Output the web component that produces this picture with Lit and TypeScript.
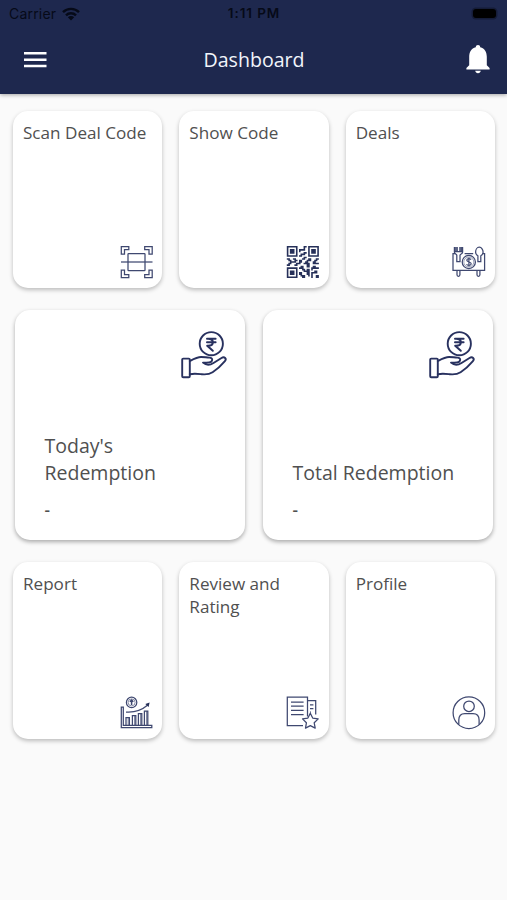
import { LitElement, html, css, svg } from "lit";
import { customElement, property } from "lit/decorators.js";

const scan = svg`<path d="M1.3 1.6h7.5v3h-4.3v4.600H1.300zM32.200 1.600h-7.500v3h4.300v4.600h3.200zM1.300 32.600h7.500v-3H4.500V25H1.300zM32.200 32.600h-7.500v-3h4.300V25h3.200z"/><rect x="8" y="8.600" width="17" height="17" rx=".6"/><path d="M1 17h31.500"/>`;

const modules = [
  "111111100001101111111",
  "100000100001001000001",
  "101110101111001011101",
  "101110101000001011101",
  "101110100001101011101",
  "100000100111001000001",
  "111111101100001111111",
  "000000000001100000000",
  "110011000011001100011",
  "011001101100011100110",
  "001111001100110001100",
  "011000111001111001111",
  "110001100000011000000",
  "000000000110011001100",
  "111111101110000011111",
  "100000100011011010000",
  "101110100001111000110",
  "101110101100011011110",
  "101110101100011010000",
  "100000100111001010011",
  "111111100011000010011",
];
const qrPath = modules
  .map((row, y) =>
    [...row].map((m, x) => (m === "1" ? `M${x} ${y}h1.05v1.05h-1.05z` : "")).join("")
  )
  .join("");
const qr = svg`<path class="fill" transform="translate(.8 1) scale(1.524)" d=${qrPath}></path>`;

const deals = svg`<path d="M3 8.700H1v16.600h31.600V8.700h-2M12.600 8.700h8.600"/><circle cx="16.800" cy="17" r="6.600"/><circle cx="16.800" cy="17" r="5" stroke-width=".5"/><path d="M19 14.700c-.6-1.600-4.200-1.500-4.200.5 0 2.200 4.400 1.300 4.400 3.600 0 2-4 2-4.600.3M16.900 12.600v9" stroke-width="1.200"/><path d="M2.400 2v5.200c0 1.700 2.200 1.700 2.400 3v6.500h3.200v-6.500c.2-1.300 2.600-1.300 2.600-3V2M5.200 2v5M7.900 2v5M3.800 2v5M9.300 2v5M2.400 6.600h8.200"/><path d="M27.300 2.200c-2.300 0-3.700 2.600-3.700 5 0 1.800.9 2.900 2.300 3.600v5.900h2.900v-5.900c1.400-.7 2.300-1.800 2.300-3.600 0-2.400-1.500-5-3.800-5z"/><path d="M5 25.300v4.500c0 2 2.900 2 2.900 0v-4.500M25 25.300v4.500c0 2 2.900 2 2.900 0v-4.500"/>`;

const report = svg`<circle cx="11.600" cy="6.400" r="5.200"/><circle cx="11.600" cy="6.400" r="3.500" stroke-width=".6"/><path d="M11.600 9V4.200M9.900 5.700l1.700-1.700 1.700 1.700" stroke-width="1.500"/><path d="M1.300 11h2v18.300h28.500v2.200H1.300zM6 29v-7.500h3.400V29M12.400 29v-9.500h3.400V29M18.400 29V17.500h3.400V29M24.400 29v-14h3.400v14"/><path d="M8.200 21.500V29M14.600 19.500V29M20.600 17.500V29M26.600 15V29" stroke-width=".7"/><path d="M6 16.100c8 .6 15-1.200 21.800-7"/><path class="fill" d="M25.300 7.900l4.300-1.300-1 4.300z"/>`;

const review = svg`<path d="M21.500 20.500V1.200H1.300v28.400H17M21.500 4.500h8.200v14M5 6.200h12.600M5 10.200h12.600M5 14.400h12.600M5 18.700h12.600M24 8.800h3.400M24 12.500h3.400M24 16h1"/><path stroke-linejoin="round" d="M24.300 17.200l2.400 4.900 5.500.8-4 3.900 1 5.300-4.900-2.500-4.800 2.500.9-5.300-3.900-3.900 5.400-.8z"/>`;

const profile = svg`<circle cx="16.900" cy="16.700" r="15.800"/><circle cx="17" cy="10.300" r="5.300"/><path d="M6.800 28.500V24c0-4 2.400-6.500 6-6.500h8.200c3.700 0 6.100 2.500 6.100 6.500v4.500"/>`;

const icons = { scan, qr, deals, report, review, profile };

const shared = css`
  svg { display: block; fill: none; stroke: #3f4870; stroke-width: 1.25; }
  .fill { fill: #263059; stroke: none; }
`;

@customElement("menu-tile")
class MenuTile extends LitElement {
  @property() label = "";
  @property() icon: keyof typeof icons = "scan";
  static styles = [
    shared,
    css`
      :host {
        display: flex; flex-direction: column; justify-content: space-between;
        box-sizing: border-box; height: 177px; padding: 10px 8.5px 9px 10px;
        background: #fff; border-radius: 15px;
        box-shadow: 0 2px 4px rgba(0, 0, 0, 0.25);
      }
      .label { font-size: 17.1px; line-height: 23px; }
      svg { align-self: flex-end; }
    `,
  ];
  render() {
    return html`<div class="label">${this.label}</div>
      <svg width="34" height="34" viewBox="0 0 34 34">${icons[this.icon]}</svg>`;
  }
}

@customElement("stat-card")
class StatCard extends LitElement {
  @property() label = "";
  @property() value = "-";
  static styles = [
    shared,
    css`
      :host {
        display: flex; flex-direction: column; box-sizing: border-box;
        height: 230px; padding: 20px 17.5px 16px 29.5px;
        background: #fff; border-radius: 15px;
        box-shadow: 0 2px 4px rgba(0, 0, 0, 0.32);
      }
      svg { align-self: flex-end; stroke: #28315f; stroke-width: 1.9; stroke-linejoin: round; stroke-linecap: round; }
      .label { margin-top: auto; font-size: 19.5px; line-height: 27px; max-width: 172px; }
      .value { margin-top: 10px; font-size: 17px; line-height: 28px; font-weight: 600; }
    `,
  ];
  render() {
    return html`<svg width="48" height="50" viewBox="0 0 48 50">
        <circle cx="31.3" cy="13.7" r="11.6" />
        <path d="M27 8.800h8.600M27 12.200h8.600M28 8.800c6.500 0 6.500 7 0 7h-.8l5.600 5" stroke-width="2" />
        <rect x="2.200" y="28.600" width="7.600" height="18.600" rx="1" />
        <path d="M9.800 31c5-2.600 7.600-4 11.200-4 3.500 0 5.500.6 8.500.6 4 0 3.300 4.600-.5 4.800-2.500.2-4 .2-6 .2 3 2.600 7 2.600 10.500.4l8-5c3-1.800 5.500.8 3.400 3.200-3.500 4.200-8 8.300-12.300 11.100-3.800 2.400-7 2.300-11 1.900-4.200-.4-7.600-.8-11.800 0" />
      </svg>
      <div class="label">${this.label}</div>
      <div class="value">${this.value}</div>`;
  }
}

@customElement("app-root")
class AppRoot extends LitElement {
  static styles = css`
    :host {
      display: block; min-height: 900px; background: #fafafa; color: #505050;
      font-family: "Open Sans", "Noto Sans", sans-serif;
    }
    svg { display: block; }
    header { height: 93.5px; background: #1e284e; box-shadow: 0 1px 4px rgba(0, 0, 0, 0.35); }
    .status {
      display: grid; grid-template-columns: 1fr auto 1fr; align-items: center;
      height: 27px; padding: 0 8px 0 9px;
      font: 14px/27px Inter, "Liberation Sans", sans-serif; color: #060a18;
    }
    .carrier { display: flex; align-items: center; gap: 6px; letter-spacing: 0.2px; }
    .time { font-size: 13.5px; font-weight: 600; letter-spacing: 0.9px; }
    .battery {
      justify-self: end; width: 23px; height: 9px; margin-right: 3px;
      background: #000; border-radius: 3px; box-shadow: 0 0 0 1.5px #151c38;
    }
    .bar {
      display: grid; grid-template-columns: 1fr auto 1fr; align-items: center;
      height: 65px; padding: 0 17px 0 24px;
    }
    .title { margin: 0 6px 1px 0; font-size: 19.6px; font-weight: 400; color: #f2f5fb; }
    .bell { justify-self: end; }
    main { display: flex; flex-direction: column; gap: 22px; padding: 17.5px 12px 0 13px; }
    .tiles { display: grid; grid-template-columns: repeat(3, 1fr); gap: 17px; }
    .stats { display: grid; grid-template-columns: 1fr 1fr; gap: 18px; padding: 0 2px; }
  `;
  render() {
    return html`
      <header>
        <div class="status">
          <div class="carrier">
            <span>Carrier</span>
            <svg width="18" height="14" viewBox="0 0 18 14" fill="none" stroke="#060a18" stroke-width="2.4">
              <path d="M1 5.200a11.300 11.300 0 0 1 16 0M4 8.300a7 7 0 0 1 10 0" />
              <path d="M9 13.500L5.800 10.300a4.500 4.500 0 0 1 6.400 0z" fill="#060a18" stroke="none" />
            </svg>
          </div>
          <span class="time">1:11 PM</span>
          <span class="battery"></span>
        </div>
        <div class="bar">
          <svg width="23" height="16" viewBox="0 0 23 16" fill="#fff">
            <path d="M0 0h22.500v2.600H0zM0 6.400h22.500V9H0zM0 12.700h22.500v2.600H0z" />
          </svg>
          <h1 class="title">Dashboard</h1>
          <svg class="bell" width="24" height="29" viewBox="0 0 24 29" fill="#fff">
            <path d="M12 0c-1.300 0-2.200.9-2.200 2.200-4.600 1.200-6.600 5-6.600 9.600v8.400L.4 23v1.500h23.200V23l-2.800-2.800v-8.400c0-4.600-2-8.400-6.600-9.600C14.200.9 13.300 0 12 0zM9.200 25.800c.3 1.500 1.300 2.400 2.800 2.400s2.500-.9 2.800-2.400z" />
          </svg>
        </div>
      </header>
      <main>
        <section class="tiles">
          <menu-tile label="Scan Deal Code" icon="scan"></menu-tile>
          <menu-tile label="Show Code" icon="qr"></menu-tile>
          <menu-tile label="Deals" icon="deals"></menu-tile>
        </section>
        <section class="stats">
          <stat-card label="Today's Redemption"></stat-card>
          <stat-card label="Total Redemption"></stat-card>
        </section>
        <section class="tiles">
          <menu-tile label="Report" icon="report"></menu-tile>
          <menu-tile label="Review and Rating" icon="review"></menu-tile>
          <menu-tile label="Profile" icon="profile"></menu-tile>
        </section>
      </main>
    `;
  }
}
